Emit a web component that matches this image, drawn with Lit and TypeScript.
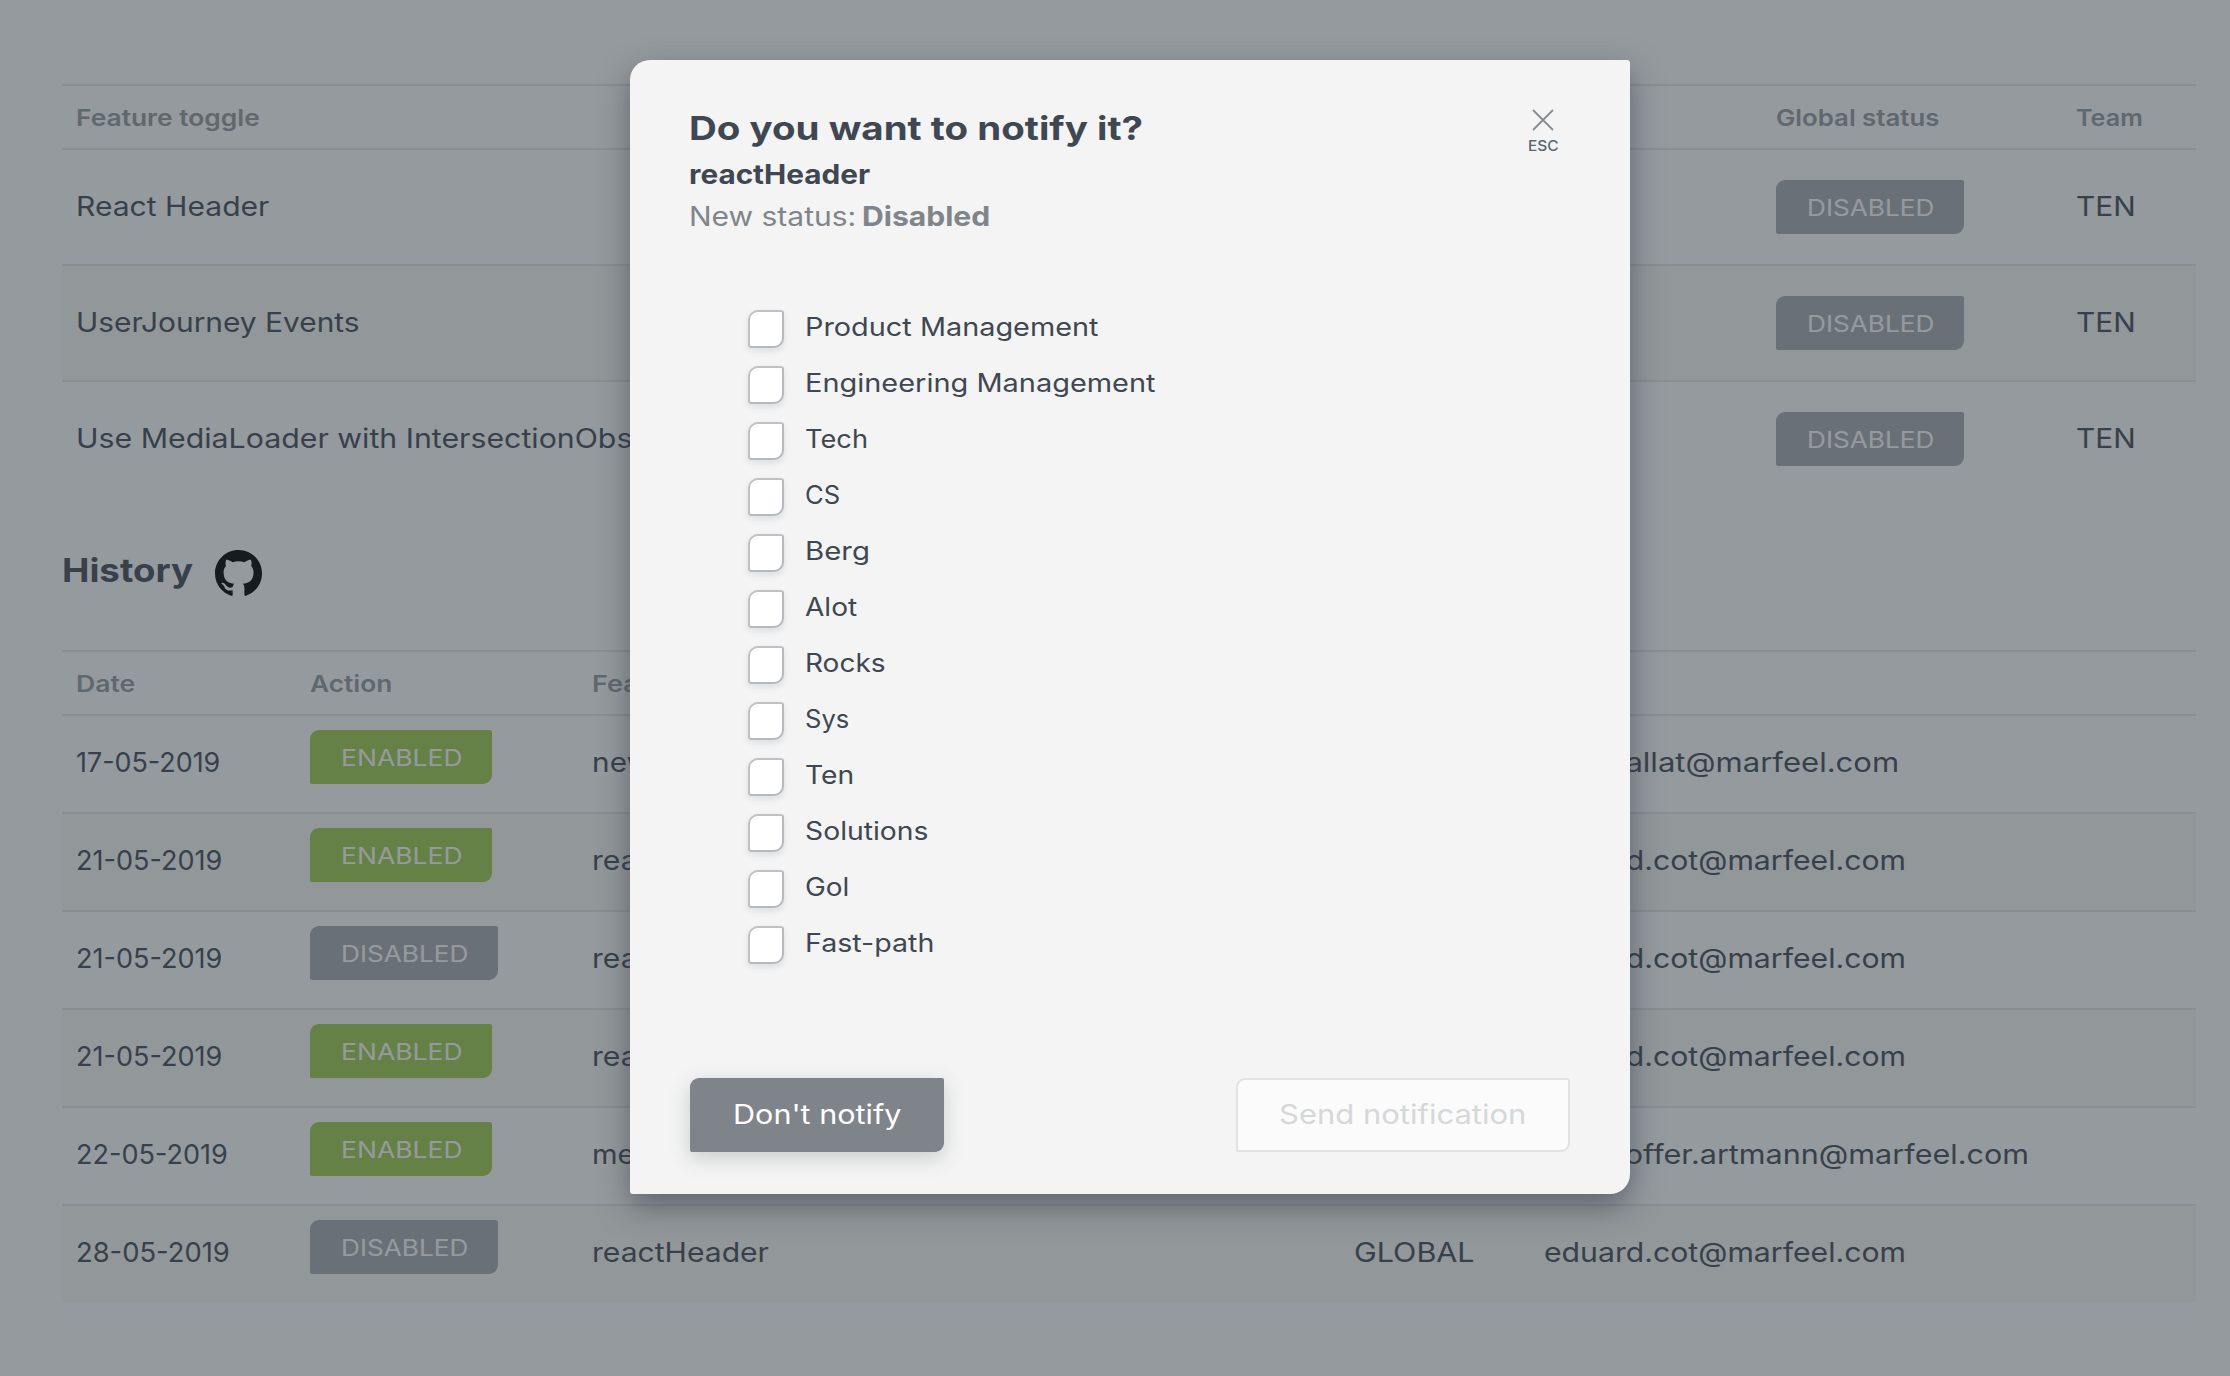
import { LitElement, html, css, svg } from "lit";
import { customElement, property } from "lit/decorators.js";
import { classMap } from "lit/directives/class-map.js";

/** A single line of text whose drawn width is stretched to a set measure. */
@customElement("fit-text")
class FitText extends LitElement {
  @property() text = "";
  /** Drawn width in pixels, from the first glyph's edge to the last one's. */
  @property({ type: Number }) measure = 0;

  static styles = css`
    :host {
      display: inline-block;
      white-space: pre;
      text-align: left;
    }
    .run {
      display: inline-block;
      transform-origin: 0 50%;
    }
  `;

  render() {
    return html`<span class="run">${this.text}</span>`;
  }

  updated() {
    const run = this.renderRoot.querySelector<HTMLElement>(".run")!;
    const ctx = document.createElement("canvas").getContext("2d");
    if (!ctx || !this.measure) return;
    const cs = getComputedStyle(run);
    ctx.font = `${cs.fontWeight} ${cs.fontSize} ${cs.fontFamily}`;
    const m = ctx.measureText(this.text);
    const ink = m.actualBoundingBoxLeft + m.actualBoundingBoxRight;
    const k = this.measure / ink;
    run.style.transform = `scaleX(${k})`;
    this.style.width = `${m.width * k}px`;
  }
}

const t = (text: string, measure: number) =>
  html`<fit-text .text=${text} .measure=${measure}></fit-text>`;

interface HistoryEntry {
  date: [string, number];
  enabled: boolean;
  feature: [string, number];
  scope: string;
  author: [string, number];
}

@customElement("app-root")
class AppRoot extends LitElement {
  static styles = css`
    :host {
      display: block;
      position: relative;
      width: 2230px;
      height: 1376px;
      overflow: hidden;
      background: #fff;
      color: #444c58;
      font-family: "Inter", "Open Sans", sans-serif;
      font-size: 27px;
      font-weight: 400;
      box-sizing: border-box;
    }
    * {
      box-sizing: border-box;
    }
    .page {
      padding: 84px 34px 0 62px;
    }
    .row {
      display: grid;
      align-items: center;
      border-bottom: 2px solid #e8e7e7;
      white-space: nowrap;
    }
    .row > * {
      padding-left: 14px;
    }
    .toggles .row {
      grid-template-columns: 1700px 300px 1fr;
      height: 116px;
    }
    .toggles .row .cell {
      padding-bottom: 2px;
    }
    .history .row {
      grid-template-columns: 234px 282px 762px 190px 1fr;
      height: 98px;
    }
    .history .row .cell {
      padding-bottom: 4px;
    }
    .row:nth-child(odd) {
      background: #f8f8f6;
    }
    .toggles .row.head,
    .history .row.head {
      height: 66px;
      background: none;
      border-top: 2px solid #e8e7e7;
      font-size: 23px;
      font-weight: 600;
      color: #949aa0;
    }
    .row.head .cell.cell {
      padding-top: 2px;
      padding-bottom: 0;
    }
    .toggles .row:last-child {
      height: 114px;
      border-bottom: 0;
    }
    .history .row:last-child {
      height: 96px;
      border-bottom: 0;
    }
    .history .action {
      align-self: start;
      padding-top: 14px;
    }
    .badge {
      display: flex;
      align-items: center;
      justify-content: center;
      width: 188px;
      height: 54px;
      padding: 1px 0 0 2px;
      border-radius: 9px 2px 9px 2px;
      background: #a8aab2;
      color: #fff;
      font-size: 23px;
      font-weight: 400;
    }
    .badge.on {
      width: 182px;
      background: #9ecc4c;
    }
    .section {
      display: flex;
      align-items: center;
      height: 154px;
    }
    .section h2 {
      width: 153px;
      margin: 0;
      padding-bottom: 6px;
      font-size: 33px;
      font-weight: 700;
    }
    .github {
      display: block;
      width: 47px;
      height: 47px;
      fill: #000;
    }
    .overlay {
      position: absolute;
      inset: 0;
      display: flex;
      justify-content: center;
      align-items: flex-start;
      padding: 60px 0 0 30px;
      background: rgba(44, 54, 62, 0.5);
    }
    .modal {
      display: flex;
      flex-direction: column;
      width: 1000px;
      height: 1134px;
      padding: 45px 60px 42px;
      background: #f4f4f4;
      border-radius: 20px 3px 20px 3px;
      box-shadow: 0 12px 30px rgba(42, 48, 62, 0.5);
      color: #3f4852;
    }
    .top {
      display: flex;
      justify-content: space-between;
    }
    .heading {
      margin-left: -1px;
    }
    .title {
      margin: 0;
      font-size: 33px;
      font-weight: 700;
      line-height: 46px;
    }
    .name {
      padding-top: 1px;
      font-weight: 700;
      line-height: 46px;
    }
    .status {
      display: flex;
      gap: 6px;
      line-height: 38px;
      font-weight: 400;
      color: #80858b;
    }
    .status b {
      font-weight: 700;
    }
    .close {
      display: flex;
      flex-direction: column;
      align-items: center;
      width: 54px;
      padding: 4px 0 0;
      border: 0;
      background: none;
      color: #5d656e;
      font: 500 14.5px/18px "Inter", "Open Sans", sans-serif;
    }
    .close svg {
      display: block;
      width: 22px;
      height: 22px;
      margin-bottom: 6px;
      fill: none;
      stroke: #868c92;
      stroke-width: 1.8;
      stroke-linecap: round;
    }
    .teams {
      display: flex;
      flex-direction: column;
      gap: 18px;
      margin: 74px 0 0;
      padding: 0 0 0 58px;
      list-style: none;
      font-size: 25px;
    }
    .team {
      display: flex;
      align-items: center;
      gap: 21px;
      height: 38px;
    }
    .team fit-text {
      padding-bottom: 4px;
    }
    .box {
      width: 36px;
      height: 38px;
      border: 2px solid #bfc1c4;
      border-right-color: #b6babf;
      border-bottom-color: #b6babf;
      border-radius: 10px 3px 10px 3px;
      background: #fff;
      box-shadow: 0 3px 6px rgba(60, 70, 80, 0.12);
    }
    .actions {
      display: flex;
      justify-content: space-between;
      margin-top: auto;
    }
    .btn {
      display: flex;
      align-items: center;
      justify-content: center;
      height: 74px;
      padding: 0 0 2px;
      border: 0;
      border-radius: 9px 2px 9px 2px;
      font: 400 27px "Inter", "Open Sans", sans-serif;
    }
    .skip {
      width: 254px;
      background: #7f838a;
      color: #fff;
      box-shadow: 0 6px 20px rgba(70, 90, 84, 0.25);
    }
    .send {
      width: 334px;
      border: 2px solid #e1e2e2;
      background: #fbfbfb;
      color: #d5d7d8;
    }
  `;

  private toggles: [string, number][] = [
    ["React Header", 191],
    ["UserJourney Events", 280],
    ["Use MediaLoader with IntersectionObserver", 629],
  ];

  private history: HistoryEntry[] = [
    { date: ["17-05-2019", 142.5], enabled: true, feature: ["newHeader", 160], scope: "GLOBAL", author: ["pau.vallat@marfeel.com", 351] },
    { date: ["21-05-2019", 143.5], enabled: true, feature: ["reactHeader", 174.5], scope: "GLOBAL", author: ["eduard.cot@marfeel.com", 359] },
    { date: ["21-05-2019", 143.5], enabled: false, feature: ["reactHeader", 174.5], scope: "GLOBAL", author: ["eduard.cot@marfeel.com", 359] },
    { date: ["21-05-2019", 143.5], enabled: true, feature: ["reactHeader", 174.5], scope: "GLOBAL", author: ["eduard.cot@marfeel.com", 359] },
    { date: ["22-05-2019", 149], enabled: true, feature: ["mediaLoader", 178], scope: "GLOBAL", author: ["christoffer.artmann@marfeel.com", 482] },
    { date: ["28-05-2019", 151], enabled: false, feature: ["reactHeader", 174.5], scope: "GLOBAL", author: ["eduard.cot@marfeel.com", 359] },
  ];

  private teams: [string, number][] = [
    ["Product Management", 291],
    ["Engineering Management", 348],
    ["Tech", 60],
    ["CS", 33],
    ["Berg", 61],
    ["Alot", 52],
    ["Rocks", 77],
    ["Sys", 42],
    ["Ten", 46],
    ["Solutions", 121],
    ["Gol", 42],
    ["Fast-path", 125],
  ];

  private badge(enabled: boolean) {
    return html`<div class=${classMap({ badge: true, on: enabled })}>
      ${enabled ? t("ENABLED", 118.5) : t("DISABLED", 124.5)}
    </div>`;
  }

  private githubMark = svg`<path fill-rule="evenodd" d="M8 0C3.58 0 0 3.58 0 8c0 3.54 2.29 6.53 5.47 7.59.4.07.55-.17.55-.38 0-.19-.01-.82-.01-1.49-2.01.37-2.53-.49-2.69-.94-.09-.23-.48-.94-.82-1.13-.28-.15-.68-.52-.01-.53.63-.01 1.08.58 1.23.82.72 1.21 1.87.87 2.33.66.07-.52.28-.87.51-1.07-1.78-.2-3.64-.89-3.64-3.95 0-.87.31-1.59.82-2.15-.08-.2-.36-1.02.08-2.12 0 0 .67-.21 2.2.82.64-.18 1.32-.27 2-.27s1.36.09 2 .27c1.53-1.04 2.2-.82 2.2-.82.44 1.1.16 1.92.08 2.12.51.56.82 1.27.82 2.15 0 3.07-1.87 3.75-3.65 3.95.29.25.54.73.54 1.48 0 1.07-.01 1.93-.01 2.2 0 .21.15.46.55.38A8.01 8.01 0 0 0 16 8c0-4.42-3.58-8-8-8z"/>`;

  render() {
    return html`
      <main class="page">
        <div class="toggles">
          <div class="row head">
            <div class="cell">${t("Feature toggle", 182)}</div>
            <div class="cell">${t("Global status", 161.5)}</div>
            <div class="cell">${t("Team", 66)}</div>
          </div>
          ${this.toggles.map(
            ([name, w]) => html`<div class="row">
              <div class="cell">${t(name, w)}</div>
              <div>${this.badge(false)}</div>
              <div class="cell">${t("TEN", 56)}</div>
            </div>`
          )}
        </div>
        <div class="section">
          <h2>${t("History", 129)}</h2>
          <svg class="github" viewBox="0 0 16 16">${this.githubMark}</svg>
        </div>
        <div class="history">
          <div class="row head">
            <div class="cell">${t("Date", 57.5)}</div>
            <div class="cell">${t("Action", 81)}</div>
            <div class="cell">${t("Feature", 97)}</div>
            <div class="cell"></div>
            <div class="cell"></div>
          </div>
          ${this.history.map(
            (h) => html`<div class="row">
              <div class="cell">${t(...h.date)}</div>
              <div class="action">${this.badge(h.enabled)}</div>
              <div class="cell">${t(...h.feature)}</div>
              <div class="cell">${t(h.scope, 118)}</div>
              <div class="cell">${t(...h.author)}</div>
            </div>`
          )}
        </div>
      </main>
      <div class="overlay">
        <section class="modal">
          <div class="top">
            <header class="heading">
              <h1 class="title">${t("Do you want to notify it?", 450)}</h1>
              <div class="name">${t("reactHeader", 180)}</div>
              <div class="status">${t("New status:", 163)} <b>${t("Disabled", 126)}</b></div>
            </header>
            <button class="close">
              <svg viewBox="0 0 22 22"><path d="M1.5 1.5l19 19M20.5 1.5l-19 19" /></svg>
              ${t("ESC", 29)}
            </button>
          </div>
          <ul class="teams">
            ${this.teams.map(
              ([name, w]) => html`<li class="team"><span class="box"></span>${t(name, w)}</li>`
            )}
          </ul>
          <div class="actions">
            <button class="btn skip">${t("Don't notify", 166)}</button>
            <button class="btn send">${t("Send notification", 244)}</button>
          </div>
        </section>
      </div>
    `;
  }
}
